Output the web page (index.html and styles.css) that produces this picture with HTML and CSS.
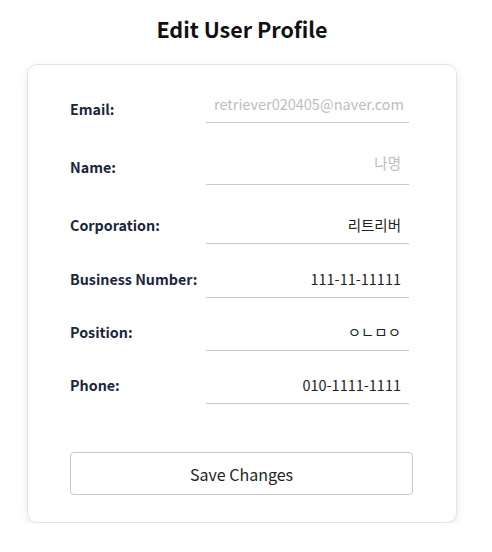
FILE: index.html
```html
<!DOCTYPE html>
<html lang="en">
<head>
<meta charset="utf-8">
<title>Edit User Profile</title>
<link rel="stylesheet" href="styles.css">
</head>
<body>
<div class="page">
  <h1 class="title">Edit User Profile</h1>
  <form class="card">
    <div class="row row-first">
      <label class="label" for="email">Email:</label>
      <input class="field field-ph" id="email" type="text" placeholder="retriever020405@naver.com">
    </div>
    <div class="row row-second">
      <label class="label" for="name">Name:</label>
      <input class="field" id="name" type="text" lang="ko" placeholder="나명">
    </div>
    <div class="row row-third">
      <label class="label" for="corp">Corporation:</label>
      <input class="field" id="corp" type="text" lang="ko" value="리트리버">
    </div>
    <div class="row row-fourth">
      <label class="label" for="biz">Business Number:</label>
      <input class="field" id="biz" type="text" value="111-11-11111">
    </div>
    <div class="row">
      <label class="label" for="pos">Position:</label>
      <input class="field" id="pos" type="text" lang="ko" value="ㅇㄴㅁㅇ">
    </div>
    <div class="row">
      <label class="label" for="phone">Phone:</label>
      <input class="field" id="phone" type="text" value="010-1111-1111">
    </div>
    <button class="save" type="button">Save Changes</button>
  </form>
</div>
</body>
</html>
```

FILE: styles.css
```css
* { box-sizing: border-box; }
body {
  margin: 0;
  background: #fff;
  font-family: "Noto Sans CJK KR", "Noto Sans", sans-serif;
  color: #222;
}
.page {
  width: 430px;
  margin-left: 27px;
  padding-top: 13px;
}
.title {
  margin: 0 0 19px;
  text-align: center;
  font-size: 21.5px;
  font-weight: 700;
  line-height: 32px;
  color: #111;
}
.card {
  border: 1px solid #e2e4e8;
  border-radius: 10px;
  box-shadow: 0 3px 8px rgba(180, 195, 215, 0.35);
  padding: 19px 43px 27px 42px;
  display: flex;
  flex-direction: column;
}
.row {
  display: flex;
  align-items: center;
  margin-top: 14px;
}
.row-first { margin-top: 0; }
.row-second { margin-top: 23px; }
.row-third { margin-top: 20px; }
.row-fourth { margin-top: 15px; }
.row-first .label { position: relative; top: 5px; }
.row-second .label { position: relative; top: 1px; }
.row-second .field { padding-bottom: 6px; }
.label {
  width: 136px;
  flex: none;
  font-size: 14.3px;
  font-weight: 700;
  color: #1b263a;
}
.field {
  width: 203px;
  height: 39px;
  border: none;
  border-bottom: 1px solid #c9c9c9;
  padding: 0 8px 0 0;
  text-align: right;
  font-family: "Noto Sans CJK KR", "Noto Sans", sans-serif;
  font-size: 14.5px;
  color: #222;
  outline: none;
  background: transparent;
}
.field-ph { padding-right: 5px; }
.field::placeholder { color: #bdbdbd; }
.save {
  margin-top: 48px;
  height: 43px;
  width: 100%;
  background: #fff;
  border: 1px solid #c8c8c8;
  border-radius: 4px;
  font-family: "Noto Sans CJK KR", "Noto Sans", sans-serif;
  font-size: 16px;
  color: #222;
}
```
